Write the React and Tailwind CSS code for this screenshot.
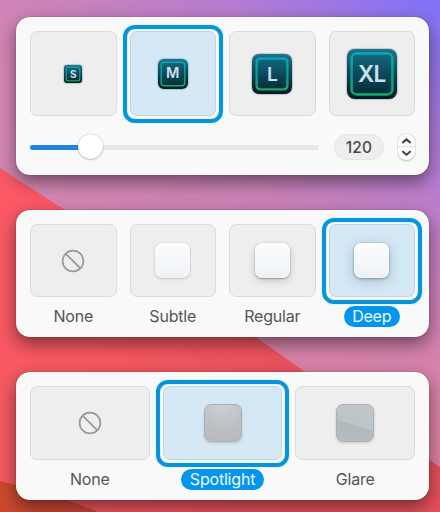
import React from "react";

const SIZES = [
  { label: "S", size: 18, inset: 2.2, radius: 1.8, border: 1.2, box: "size-[18px] rounded-[3px]", text: "text-[10px] font-bold" },
  { label: "M", size: 30, inset: 3.2, radius: 3, border: 1.5, box: "size-[30px] rounded-[6px]", text: "text-[14.5px] font-semibold" },
  { label: "L", size: 40, inset: 4.6, radius: 3.6, border: 2.3, box: "size-[40px] rounded-[7px]", text: "top-[0.5px] text-[19px] font-semibold" },
  { label: "XL", size: 50, inset: 4.6, radius: 5, border: 2.5, box: "size-[50px] rounded-[8px]", text: "top-[0.5px] text-[22.5px] font-semibold tracking-[-0.6px]" },
];

function Backdrop() {
  return (
    <svg className="absolute inset-0" width="440" height="512" viewBox="0 0 440 512">
      <defs>
        <linearGradient id="sky" gradientUnits="userSpaceOnUse" x1="150" y1="330" x2="420" y2="0">
          <stop offset="0" stopColor="#dc8a9c" />
          <stop offset="0.4" stopColor="#cb83b4" />
          <stop offset="0.72" stopColor="#b67cd2" />
          <stop offset="1" stopColor="#8373f6" />
        </linearGradient>
        <linearGradient id="pink" gradientUnits="userSpaceOnUse" x1="0" y1="80" x2="190" y2="0">
          <stop offset="0" stopColor="#d386b5" stopOpacity="0.9" />
          <stop offset="1" stopColor="#c47fc8" stopOpacity="0" />
        </linearGradient>
        <linearGradient id="rose" gradientUnits="userSpaceOnUse" x1="440" y1="200" x2="400" y2="440">
          <stop offset="0" stopColor="#cf80bd" stopOpacity="0" />
          <stop offset="1" stopColor="#dc829f" />
        </linearGradient>
        <linearGradient id="red" x1="0" y1="0" x2="1" y2="0.5">
          <stop offset="0" stopColor="#fb5965" />
          <stop offset="0.4" stopColor="#f65860" />
          <stop offset="1" stopColor="#e5505b" />
        </linearGradient>
        <linearGradient id="rust" x1="0" y1="0" x2="1" y2="0">
          <stop offset="0" stopColor="#cc4a2c" />
          <stop offset="1" stopColor="#c8423b" />
        </linearGradient>
      </defs>
      <rect width="440" height="512" fill="url(#sky)" />
      <rect width="440" height="512" fill="url(#pink)" />
      <rect x="200" y="200" width="240" height="312" fill="url(#rose)" />
      <path d="M0 168 L65 210 Q170 275 256 337 L305 372 Q370 420 440 467 V512 H0Z" fill="url(#red)" />
      <path d="M0 481 Q55 494 98 512 H0Z" fill="url(#rust)" />
    </svg>
  );
}

function Panel({ className, children }) {
  return (
    <section className={`relative w-[413px] rounded-[14px] bg-[#f9f9f9] px-[14px] pt-[14px] shadow-[0_0_1px_rgba(0,0,0,0.55),0_7px_18px_rgba(0,0,0,0.48)] ${className}`}>
      {children}
    </section>
  );
}

function Tile({ selected, height, children }) {
  return (
    <div
      className={`relative flex w-full items-center justify-center rounded-[7px] border ${height} ${
        selected ? "border-[#c3d2de] bg-[#d4e8f6]" : "border-[#dcdcde] bg-[#eeeeee]"
      }`}
    >
      {selected && (
        <span className="absolute -inset-y-[7.5px] -left-[8px] -right-[7.5px] rounded-[12px] border-4 border-[#0994d9] shadow-[0_0_1.5px_#6bddff,inset_0_0_1.5px_#6bddff]" />
      )}
      {children}
    </div>
  );
}

function Label({ selected, children }) {
  return (
    <span
      className={`flex h-[21px] items-center rounded-full px-[8.5px] text-[16px] leading-none tracking-[-0.2px] ${
        selected ? "bg-[#0695ed] text-[#e8fcff]" : "text-[#555555]"
      }`}
    >
      <span className="-mt-[2px]">{children}</span>
    </span>
  );
}

function Option({ label, selected, height, children }) {
  return (
    <div className="flex min-w-0 flex-1 flex-col items-center gap-[9px]">
      <Tile selected={selected} height={height}>{children}</Tile>
      <Label selected={selected}>{label}</Label>
    </div>
  );
}

function AppBadge({ item }) {
  const inner = item.size - item.inset * 2;
  return (
    <div className={`relative flex items-center justify-center bg-linear-to-b from-[#1f7389] via-[#0b4554] to-[#031a22] shadow-[0_0_1.5px_#164452] ${item.box}`}>
      <svg className="absolute inset-0 size-full" viewBox={`0 0 ${item.size} ${item.size}`}>
        <defs>
          <linearGradient id={`rim-${item.label}`} x1="0" y1="0" x2="0" y2="1">
            <stop offset="0" stopColor="#04aabb" />
            <stop offset="0.5" stopColor="#0c9a93" />
            <stop offset="1" stopColor="#14ac68" />
          </linearGradient>
          <linearGradient id={`face-${item.label}`} x1="0" y1="0" x2="0" y2="1">
            <stop offset="0" stopColor="#12677e" />
            <stop offset="1" stopColor="#052c3a" />
          </linearGradient>
        </defs>
        <rect
          x={item.inset}
          y={item.inset}
          width={inner}
          height={inner}
          rx={item.radius}
          fill={`url(#face-${item.label})`}
          stroke={`url(#rim-${item.label})`}
          strokeWidth={item.border}
        />
      </svg>
      <span className={`relative leading-none text-[#d0e0ea] ${item.text}`}>{item.label}</span>
    </div>
  );
}

function NoneIcon() {
  return (
    <svg width="24" height="24" viewBox="0 0 24 24" fill="none" stroke="#98989d" strokeWidth="1.7">
      <circle cx="12" cy="12" r="10.4" />
      <path d="M4.6 4.6 19.4 19.4" />
    </svg>
  );
}

function Swatch({ shadow }) {
  return <div className={`size-[35px] rounded-[7px] bg-linear-to-b from-[#fcfdfd] to-[#eef1f4] ${shadow}`} />;
}

function Slider() {
  return (
    <div className="relative flex h-[26px] w-[289px] items-center">
      <span className="h-[5px] w-[60px] rounded-l-full bg-[#2082e5]" />
      <span className="h-[5px] flex-1 rounded-r-full bg-[#e8e8e8]" />
      <span className="absolute left-[48px] top-0 size-[25px] rounded-full bg-white shadow-[0_0_1px_rgba(0,0,0,0.35),0_1px_2px_rgba(0,0,0,0.2)]" />
    </div>
  );
}

function Stepper() {
  return (
    <div className="ml-[14px] h-[26px] w-[17px] rounded-[8px] bg-white shadow-[0_0_1px_rgba(0,0,0,0.35),0_1px_2px_rgba(0,0,0,0.2)]">
      <svg width="17" height="26" viewBox="0 0 17 26" fill="none">
        <path d="M0 12.7H17" stroke="#e3e3e3" strokeWidth="1.6" />
        <path d="M5 8.4 8.5 5.4 12 8.4M5 17.8 8.5 20.8 12 17.8" stroke="#444" strokeWidth="2.1" strokeLinecap="round" strokeLinejoin="round" />
      </svg>
    </div>
  );
}

export default function App() {
  return (
    <main className="relative h-[512px] w-[440px] overflow-hidden pl-4 pt-[17px] font-['Inter','Liberation_Sans',sans-serif]">
      <Backdrop />

      <Panel className="h-[158px]">
        <div className="flex gap-[13px]">
          {SIZES.map((item) => (
            <div key={item.label} className="flex-1">
              <Tile selected={item.label === "M"} height="h-[85px]">
                <AppBadge item={item} />
              </Tile>
            </div>
          ))}
        </div>
        <div className="mt-[18px] flex items-center">
          <Slider />
          <span className="ml-[15px] flex h-[26px] w-[50px] items-center justify-center rounded-full border border-[#e6e6e6] bg-[#eeeeee] pt-px text-[15.5px] font-medium tracking-[0.2px] text-[#4a4a4a]">
            120
          </span>
          <Stepper />
        </div>
      </Panel>

      <Panel className="mt-[35px] h-[127px]">
        <div className="flex gap-[13px]">
          <Option label="None" height="h-[73px]"><NoneIcon /></Option>
          <Option label="Subtle" height="h-[73px]">
            <Swatch shadow="shadow-[0_0_1px_rgba(0,0,0,0.25),0_1px_3px_rgba(0,0,0,0.16)]" />
          </Option>
          <Option label="Regular" height="h-[73px]">
            <Swatch shadow="shadow-[0_0_1px_rgba(0,0,0,0.3),0_1px_2px_rgba(0,0,0,0.28),0_3px_8px_rgba(0,0,0,0.14)]" />
          </Option>
          <Option label="Deep" selected height="h-[73px]">
            <Swatch shadow="shadow-[0_0_1px_rgba(0,0,0,0.35),0_1px_3px_rgba(0,0,0,0.28),0_3px_14px_rgba(0,30,60,0.2)]" />
          </Option>
        </div>
      </Panel>

      <Panel className="mt-[35px] h-[128px]">
        <div className="flex gap-[13px]">
          <Option label="None" height="h-[74px]"><NoneIcon /></Option>
          <Option label="Spotlight" selected height="h-[74px]">
            <div className="size-[38px] rounded-[7px] border border-[#acb1b4] bg-[radial-gradient(circle_at_50%_0%,#ccd0d2_0%,#bcc0c2_60%,#b6babd_100%)] shadow-[0_1px_3px_rgba(0,0,0,0.15)]" />
          </Option>
          <Option label="Glare" height="h-[74px]">
            <div className="size-[38px] rounded-[7px] border border-[#a9b2b6] bg-[linear-gradient(197deg,#c1c8cb_0%,#bcc4c7_54%,#b0babd_56%,#b5bec1_100%)] shadow-[0_1px_3px_rgba(0,0,0,0.15)]" />
          </Option>
        </div>
      </Panel>
    </main>
  );
}
